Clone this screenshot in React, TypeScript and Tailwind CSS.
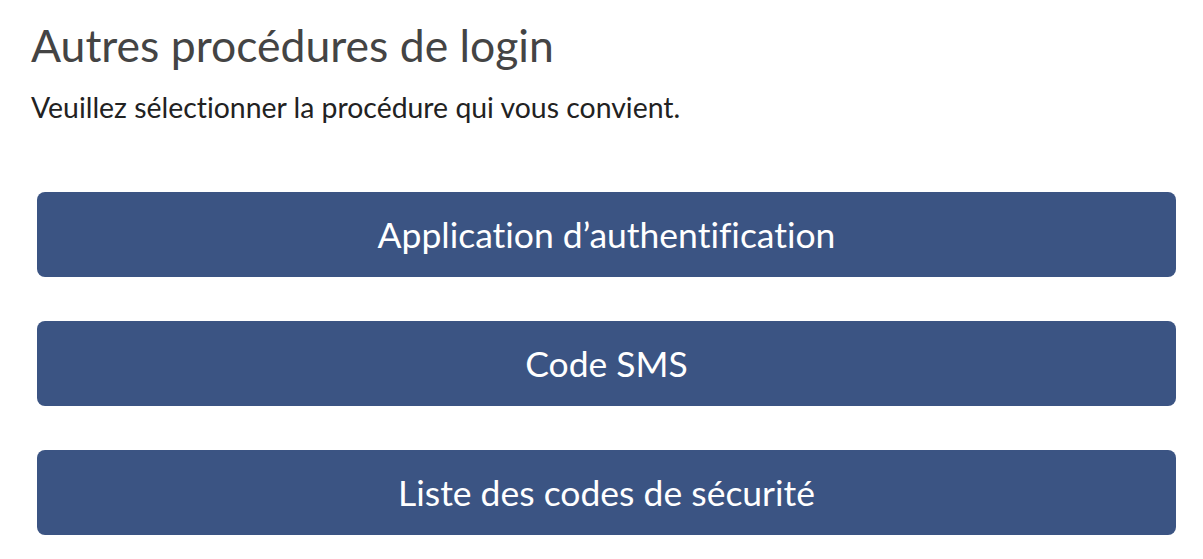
import React from 'react';

const procedures = ['Application d’authentification', 'Code SMS', 'Liste des codes de sécurité'];

export default function App() {
  return (
    <div
      className="min-h-screen bg-white pl-[31px] pr-[27px] pt-[18px] [font-variant-ligatures:none]"
      style={{ fontFamily: 'Lato, "Noto Sans", sans-serif' }}
    >
      <h1 className="text-[44.5px] leading-[53px] font-normal text-[#444444]">Autres procédures de login</h1>
      <p className="mt-[19px] text-[28.4px] leading-[34px] text-[#222222]">Veuillez sélectionner la procédure qui vous convient.</p>
      <div className="mt-[68px] ml-[6px] flex flex-col gap-[44px]">
        {procedures.map(label => (
          <button
            key={label}
            className="h-[85px] w-full rounded-[8px] bg-[#3b5483] text-[35.5px] text-white"
          >
            {label}
          </button>
        ))}
      </div>
    </div>
  );
}
